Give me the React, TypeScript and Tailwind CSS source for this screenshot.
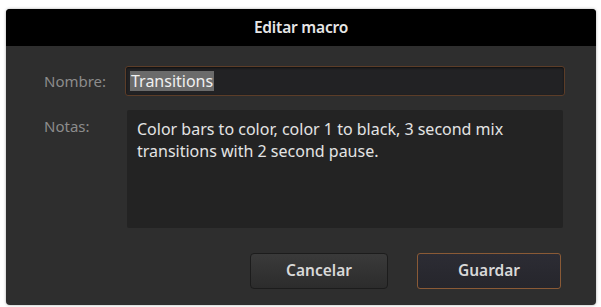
import React from "react";

export default function App() {
  return (
    <div
      className="w-[601px] h-[307px] bg-white pt-[9px] pl-[6px] overflow-hidden"
      style={{ fontFamily: '"Noto Sans", "Open Sans", sans-serif' }}
    >
      <div className="w-[590px] h-[296px] rounded-[4px] overflow-hidden bg-[#2e2e2e] flex flex-col shadow-[0_0_3px_rgba(0,0,0,0.35)]">
        <div className="h-[37px] bg-black flex items-center justify-center">
          <span className="text-[15.5px] font-semibold text-[#e6e6e6] tracking-[-0.2px]">Editar macro</span>
        </div>
        <div className="flex-1 flex flex-col pl-[38px] pr-[31px] pt-[20px]">
          <div className="flex items-center">
            <div className="w-[81px] text-[15px] text-[#8c8c8c]">Nombre:</div>
            <div className="flex-1 h-[30px] rounded-[3px] border border-[#5c3d28] bg-[#222224] flex items-center pl-[4px] shadow-[inset_0_1px_2px_rgba(0,0,0,0.6)]">
              <span className="bg-[#6b6b6b] text-[#f0f0f0] text-[16px] leading-[20px] px-[1px]">Transitions</span>
            </div>
          </div>
          <div className="flex mt-[14px]">
            <div className="w-[83px] text-[15px] text-[#8c8c8c] pt-[5px]">Notas:</div>
            <div className="flex-1 mr-[2px] h-[118px] rounded-[2px] bg-[#232323] pl-[10px] pt-[8px] pr-[30px] text-[16px] leading-[22px] text-[#e4e4e4]">
              Color bars to color, color 1 to black, 3 second mix transitions with 2 second pause.
            </div>
          </div>
          <div className="flex justify-end mt-[25px] gap-[29px] pr-[4px]">
            <button className="w-[138px] h-[36px] rounded-[4px] border border-[#1c1c1c] bg-gradient-to-b from-[#3a3a3a] to-[#2c2c2c] text-[15.5px] font-semibold text-[#d8d8d8]">
              Cancelar
            </button>
            <button className="w-[144px] h-[36px] rounded-[3px] border border-[#8a5a36] bg-gradient-to-b from-[#2c2c34] to-[#26262c] text-[15.5px] font-semibold text-[#d8d8d8]">
              Guardar
            </button>
          </div>
        </div>
      </div>
    </div>
  );
}
